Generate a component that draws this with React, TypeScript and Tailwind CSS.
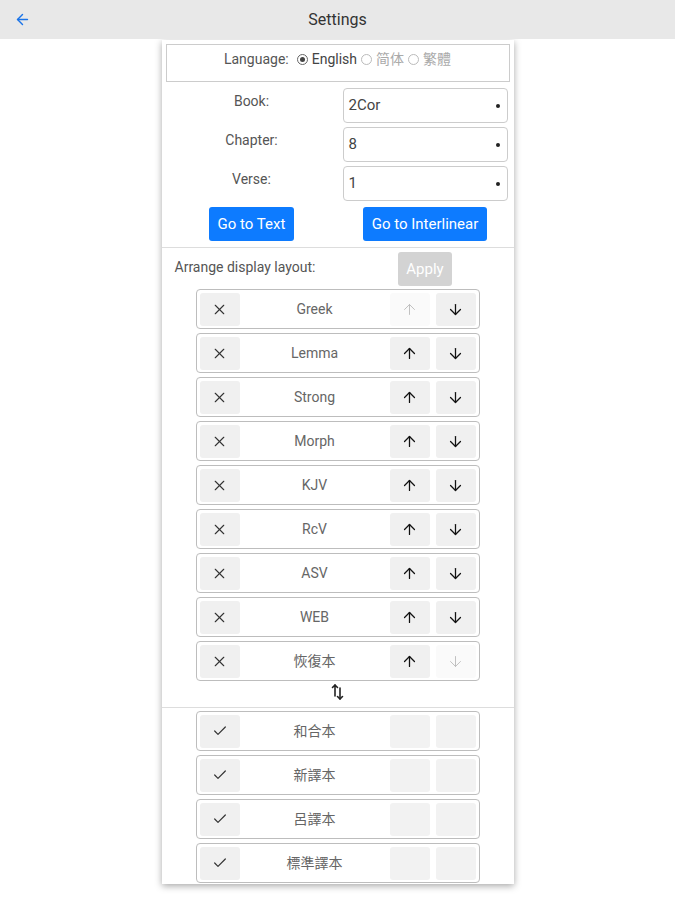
import { ArrowLeft, X, Check, ArrowUp, ArrowDown } from 'lucide-react';

type Layer = { name: string; upOff?: boolean; downOff?: boolean };

const shown: Layer[] = [
  { name: 'Greek', upOff: true },
  { name: 'Lemma' },
  { name: 'Strong' },
  { name: 'Morph' },
  { name: 'KJV' },
  { name: 'RcV' },
  { name: 'ASV' },
  { name: 'WEB' },
  { name: '恢復本', downOff: true },
];

const hidden = ['和合本', '新譯本', '呂譯本', '標準譯本'];

const font = { fontFamily: 'Roboto, "Noto Sans CJK TC", sans-serif' };

function Radio({ on }: { on?: boolean }) {
  return (
    <span className={`inline-flex w-[11px] h-[11px] rounded-full border items-center justify-center ${on ? 'border-[#666]' : 'border-[#bbb]'}`}>
      {on && <span className="w-[5px] h-[5px] rounded-full bg-[#444]" />}
    </span>
  );
}

function FakeSelect({ value }: { value: string }) {
  return (
    <div className="h-[35px] border border-[#ccc] rounded-[4px] flex items-center justify-between pl-[5px] pr-[7px] text-[15px] text-[#444]">
      <span>{value}</span>
      <span className="w-[4px] h-[4px] rounded-full bg-[#222]" />
    </div>
  );
}

function Row({ label, value }: { label: string; value: string }) {
  return (
    <div className="grid grid-cols-[172px_165px] gap-[5px]">
      <div className="text-center text-[14px] text-[#555] pt-[3px]">{label}</div>
      <FakeSelect value={value} />
    </div>
  );
}

function Item({ name, mode, upOff, downOff }: { name: string; mode: 'x' | 'check'; upOff?: boolean; downOff?: boolean }) {
  return (
    <div className="w-[284px] h-[40px] mx-auto border border-[#bdbdbd] rounded-[4px] flex items-center p-[3px]">
      <div className="w-[40px] h-[33px] bg-[#f0f0f0] rounded-[3px] flex items-center justify-center text-[#333]">
        {mode === 'x' ? <X size={17} strokeWidth={1.6} /> : <Check size={16} strokeWidth={1.8} />}
      </div>
      <div className="flex-1 text-center text-[14px] text-[#666]">{name}</div>
      {mode === 'x' ? (
        <>
          <div className={`w-[40px] h-[33px] rounded-[3px] flex items-center justify-center ${upOff ? 'bg-[#fafafa] text-[#bbb]' : 'bg-[#f0f0f0] text-[#111]'}`}>
            <ArrowUp size={17} strokeWidth={upOff ? 1.3 : 1.8} />
          </div>
          <div className={`ml-[6px] w-[40px] h-[33px] rounded-[3px] flex items-center justify-center ${downOff ? 'bg-[#fafafa] text-[#bbb]' : 'bg-[#f0f0f0] text-[#111]'}`}>
            <ArrowDown size={17} strokeWidth={downOff ? 1.3 : 1.8} />
          </div>
        </>
      ) : (
        <>
          <div className="w-[40px] h-[33px] rounded-[3px] bg-[#f2f2f2]" />
          <div className="ml-[6px] w-[40px] h-[33px] rounded-[3px] bg-[#f2f2f2]" />
        </>
      )}
    </div>
  );
}

export default function App() {
  return (
    <div className="w-[675px] h-[900px] bg-white overflow-hidden" style={font}>
      {/* top bar */}
      <div className="h-[39px] bg-[#e8e8e8] flex items-center relative">
        <ArrowLeft size={17} strokeWidth={2} className="text-[#1a73e8] ml-[14px]" />
        <div className="absolute inset-0 flex items-center justify-center text-[16px] text-[#333]">Settings</div>
      </div>

      {/* settings panel */}
      <div className="mx-auto mt-[1px] w-[352px] h-[844px] overflow-hidden bg-white shadow-[0_2px_7px_rgba(0,0,0,0.35)]">
        <div className="px-[4px] pt-[4px]">
          <div className="h-[38px] border border-[#ccc] flex items-center justify-center gap-[4px] pb-[7px] text-[14px] text-[#555]">
            <span className="mr-[4px]">Language:</span>
            <Radio on />
            <span className="text-[#444]">English</span>
            <Radio />
            <span className="text-[#aaa]">简体</span>
            <Radio />
            <span className="text-[#aaa]">繁體</span>
          </div>

          <div className="mt-[6px] flex flex-col gap-[4px]">
            <Row label="Book:" value="2Cor" />
            <Row label="Chapter:" value="8" />
            <Row label="Verse:" value="1" />
          </div>

          <div className="grid grid-cols-[172px_165px] gap-[5px] mt-[6px]">
            <div className="flex justify-center">
              <button className="h-[34px] px-[9px] rounded-[3px] bg-[#0d7bff] text-white text-[15px]">Go to Text</button>
            </div>
            <div className="flex justify-center">
              <button className="h-[34px] px-[9px] rounded-[3px] bg-[#0d7bff] text-white text-[15px]">Go to Interlinear</button>
            </div>
          </div>
        </div>

        <div className="mt-[6px] border-t border-[#ddd]" />

        <div className="grid grid-cols-[172px_165px] gap-[5px] px-[4px] pt-[4px]">
          <div className="pl-[9px] pt-[5px] text-[14px] text-[#555]">Arrange display layout:</div>
          <div className="flex justify-center">
            <button className="h-[34px] px-[8px] rounded-[3px] bg-[#d3d3d3] text-white text-[15px]">Apply</button>
          </div>
        </div>

        <div className="mt-[3px] flex flex-col gap-[4px]">
          {shown.map((l) => (
            <Item key={l.name} name={l.name} mode="x" upOff={l.upOff} downOff={l.downOff} />
          ))}
        </div>

        <div className="h-[22px] flex items-center justify-center">
          <svg width="16" height="18" viewBox="0 0 16 18" fill="none" stroke="#222" strokeWidth="1.6" strokeLinecap="round" strokeLinejoin="round">
            <path d="M5 13V2" />
            <path d="M2.5 4.5 5 2l2.5 2.5" />
            <path d="M10 5v11" />
            <path d="M7.5 13.5 10 16l2.5-2.5" />
          </svg>
        </div>

        <div className="mt-[4px] border-t border-[#ddd]" />

        <div className="mt-[3px] flex flex-col gap-[4px]">
          {hidden.map((n) => (
            <Item key={n} name={n} mode="check" />
          ))}
        </div>
      </div>
    </div>
  );
}
